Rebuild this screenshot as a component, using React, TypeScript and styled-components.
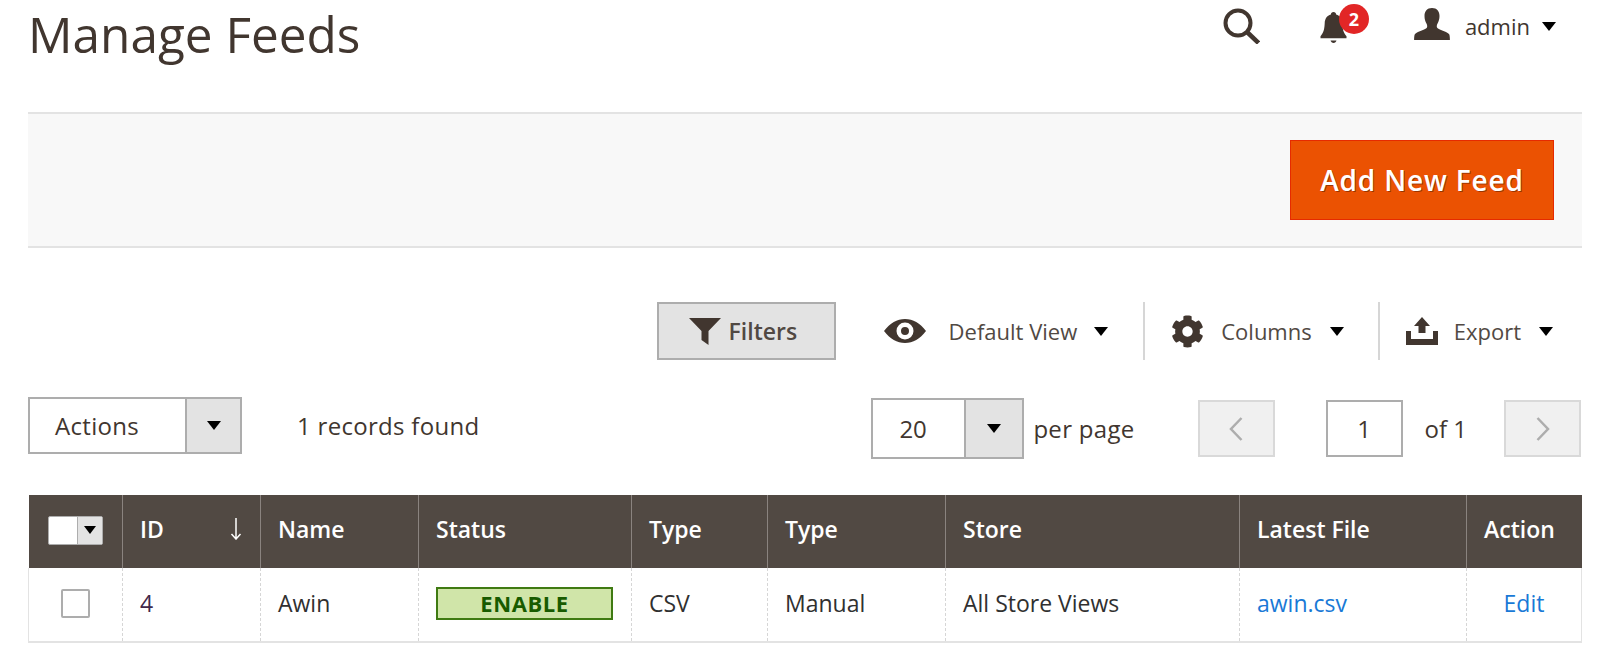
import React from 'react'
import styled, { createGlobalStyle } from 'styled-components'
import { FaCog } from 'react-icons/fa'

const GlobalStyle = createGlobalStyle`
	html, body {
		margin: 0;
		padding: 0;
		background: #fff;
	}
	body {
		font-family: 'Open Sans', 'Noto Sans', sans-serif;
		font-size: 23px;
		color: #303030;
	}
`

const Page = styled.div`
	width: 1600px;
	height: 659px;
	overflow: hidden;
	padding: 0 18px 0 28px;
	box-sizing: border-box;
`

const TopBar = styled.header`
	display: flex;
	justify-content: space-between;
	height: 112px;
`

const Title = styled.h1`
	margin: 4px 0 0;
	font-size: 49.5px;
	line-height: 60px;
	font-weight: 400;
	color: #41362f;
`

const TopActions = styled.div`
	display: flex;
	align-items: flex-start;
	padding: 8px 26px 0 0;
`

const SearchIcon = styled.svg`
	width: 37px;
	height: 36px;
	margin-right: 60px;
	color: #41362f;
`

const BellWrap = styled.div`
	position: relative;
	width: 27px;
	height: 31px;
	margin: 4px 67px 0 0;
	color: #41362f;
`

const Badge = styled.span`
	position: absolute;
	left: 19px;
	top: -8px;
	width: 30px;
	height: 30px;
	border-radius: 50%;
	background: #e22626;
	color: #fff;
	font-size: 18px;
	font-weight: 700;
	line-height: 30px;
	text-align: center;
`

const UserIcon = styled.svg`
	width: 36px;
	height: 32px;
	margin-right: 15px;
	color: #41362f;
`

const UserName = styled.span`
	margin: 0 12px 0 0;
	font-size: 22px;
	line-height: 36px;
	color: #41362f;
`

const Caret = styled.span<{ $w?: number; $mt?: number }>`
	display: inline-block;
	flex: none;
	width: 0;
	height: 0;
	margin-top: ${({ $mt }) => $mt ?? 0}px;
	border-style: solid;
	border-color: #000 transparent transparent;
	border-width: ${({ $w = 14 }) => `${Math.round($w * 0.64)}px ${$w / 2}px 0`};
`

const ActionBar = styled.section`
	display: flex;
	justify-content: flex-end;
	align-items: center;
	height: 136px;
	box-sizing: border-box;
	padding-right: 28px;
	background: #f8f8f8;
	border-top: 2px solid #e3e3e3;
	border-bottom: 2px solid #e3e3e3;
`

const PrimaryButton = styled.button`
	width: 264px;
	height: 80px;
	padding: 0;
	background: #eb5202;
	border: 1px solid #e62a00;
	color: #fff;
	font-family: inherit;
	font-size: 28px;
	font-weight: 600;
	letter-spacing: 0.85px;
	text-shadow: 1px 1px 0 rgba(0, 0, 0, 0.35);
`

const Toolbar = styled.section`
	display: flex;
	justify-content: flex-end;
	align-items: center;
	height: 58px;
	margin-top: 54px;
	padding-right: 29px;
	font-size: 22px;
`

const FilterButton = styled.button`
	display: flex;
	align-items: center;
	gap: 8px;
	width: 179px;
	height: 58px;
	margin-right: 48px;
	padding: 0 0 0 30px;
	background: #e3e3e3;
	border: 2px solid #adadad;
	color: #514943;
	font-family: inherit;
	font-size: 23px;
	font-weight: 600;
`

const ToolItem = styled.div<{ $divided?: boolean; $end?: number }>`
	display: flex;
	align-items: center;
	height: 58px;
	padding: ${({ $divided, $end = 34 }) =>
		`0 ${$end}px 0 ${$divided ? 26 : 0}px`};
	border-left: ${({ $divided }) => ($divided ? '2px solid #d6d6d6' : 'none')};
`

const ToolLabel = styled.span<{ $gap: number; $after?: number }>`
	margin: 0 ${({ $after = 17 }) => $after}px 0 ${({ $gap }) => $gap}px;
	color: #514943;
`

const EyeIcon = styled.svg`
	width: 42px;
	height: 24px;
	color: #41362f;
`

const ExportIcon = styled.svg`
	width: 32px;
	height: 28px;
	color: #41362f;
`

const GearIcon = styled(FaCog)`
	width: 33px;
	height: 33px;
	color: #41362f;
`

const PagerRow = styled.section`
	display: flex;
	align-items: center;
	height: 61px;
	margin-top: 38px;
	padding-right: 1px;
	font-size: 24px;
`

const SelectBox = styled.div<{ $w: number; $h: number; $arrow: number; $top?: boolean }>`
	display: grid;
	grid-template-columns: 1fr ${({ $arrow }) => $arrow}px;
	width: ${({ $w }) => $w}px;
	height: ${({ $h }) => $h}px;
	margin-top: ${({ $top }) => ($top ? '-1px' : '0')};
	box-sizing: border-box;
	border: 2px solid #adadad;
	background: #fff;
	align-self: ${({ $top }) => ($top ? 'flex-start' : 'center')};
`

const SelectText = styled.span<{ $pad: number; $spaced?: boolean }>`
	align-self: center;
	padding-left: ${({ $pad }) => $pad}px;
	color: #41362f;
	letter-spacing: ${({ $spaced }) => ($spaced ? '0.3px' : '0')};
`

const SelectArrow = styled.span`
	display: flex;
	align-items: center;
	justify-content: center;
	background: #e3e3e3;
	border-left: 2px solid #adadad;
`

const RecordsText = styled.span`
	margin: 0 0 6px 55px;
	flex: 1;
	color: #41362f;
	letter-spacing: 0.3px;
`

const PerPage = styled.span`
	margin: 0 63px 0 9px;
	color: #41362f;
	letter-spacing: 0.3px;
`

const PageButton = styled.button`
	display: flex;
	align-items: center;
	justify-content: center;
	width: 77px;
	height: 57px;
	padding: 0;
	background: #f0f0f0;
	border: 2px solid #d9d9d9;
	color: #adadad;
`

const PageInput = styled.div`
	display: flex;
	align-items: center;
	justify-content: center;
	width: 77px;
	height: 57px;
	margin-left: 51px;
	box-sizing: border-box;
	border: 2px solid #adadad;
	color: #41362f;
`

const PageOf = styled.span`
	margin: 0 37px 0 22px;
	color: #41362f;
`

const Chevron = styled.svg`
	width: 16px;
	height: 26px;
`

const Table = styled.table`
	width: 1553px;
	margin-top: 36px;
	border-collapse: collapse;
	table-layout: fixed;
`

const Col = styled.col<{ $w: number }>`
	width: ${({ $w }) => $w}px;
`

const HeadCell = styled.th`
	height: 73px;
	padding: 0 0 5px 17px;
	box-sizing: border-box;
	background: #514943;
	border-left: 1px solid #8a837f;
	color: #fff;
	font-size: 23px;
	font-weight: 600;
	text-align: left;

	&:first-child {
		padding: 0 0 3px;
		border-left: 0;
	}
`

const HeadInner = styled.div`
	display: flex;
	align-items: center;
	justify-content: space-between;
	padding-right: 18px;
`

const SortArrow = styled.svg`
	width: 12px;
	height: 22px;
`

const BodyCell = styled.td<{ $center?: boolean }>`
	height: 74px;
	padding: ${({ $center }) => ($center ? '0 0 3px' : '0 0 3px 17px')};
	box-sizing: border-box;
	background: #fff;
	border-left: 1px dashed #d6d6d6;
	border-bottom: 2px solid #e3e3e3;
	text-align: ${({ $center }) => ($center ? 'center' : 'left')};

	&:first-child {
		border-left: 1px solid #e3e3e3;
	}
	&:last-child {
		border-right: 1px solid #e3e3e3;
	}
`

const HeadCheck = styled.div`
	display: grid;
	grid-template-columns: 28px 1fr;
	width: 55px;
	height: 29px;
	margin: 0 0 0 19px;
	box-sizing: border-box;
	background: #fff;
	border: 1px solid #adadad;
	border-radius: 2px;
`

const HeadCheckArrow = styled.span`
	display: flex;
	align-items: center;
	justify-content: center;
	background: #e3e3e3;
	border-left: 1px solid #adadad;
`

const RowCheck = styled.div`
	width: 29px;
	height: 29px;
	margin: 0 auto;
	box-sizing: border-box;
	border: 2px solid #adadad;
	border-radius: 2px;
`

const StatusBadge = styled.div`
	width: 177px;
	height: 33px;
	box-sizing: border-box;
	background: #d0e5a9;
	border: 2px solid #3f7a12;
	color: #185b00;
	font-size: 22px;
	font-weight: 700;
	letter-spacing: 0.6px;
	line-height: 29px;
	text-align: center;
`

const RowLink = styled.a`
	color: #1979d6;
	text-decoration: none;
`

const IdText = styled.span`
	color: #41284a;
`

const columns = [94, 138, 158, 213, 136, 178, 294, 227, 115]
const heads = ['Name', 'Status', 'Type', 'Type', 'Store', 'Latest File', 'Action']

export default function App() {
	return (
		<Page>
			<GlobalStyle />
			<TopBar>
				<Title>Manage Feeds</Title>
				<TopActions>
					<SearchIcon viewBox="0 0 37 36" fill="none" stroke="currentColor">
						<circle cx="15" cy="15" r="12.5" strokeWidth="4" />
						<path d="M24 24 L35.5 35" strokeWidth="4.5" />
					</SearchIcon>
					<BellWrap>
						<svg width="27" height="31" viewBox="0 0 27 31" fill="currentColor">
							<path d="M13.5 0 c1.6 0 2.6 1 2.6 2.6 c4 1 6 4.4 6.2 8.6 c.2 5 .8 9 4.2 13 v2 H.5 v-2 c3.400-4 4-8 4.200-13 c.2-4.200 2.200-7.600 6.200-8.600 C10.900 1 11.900 0 13.500 0 Z" />
							<path d="M10.500 28.500 h6 c-.5 1.500-1.500 2.500-3 2.500 s-2.500-1-3-2.500 Z" />
						</svg>
						<Badge>2</Badge>
					</BellWrap>
					<UserIcon viewBox="0 0 36 32" fill="currentColor">
						<path d="M18 0 c5 0 7.500 3.500 7.500 8 c0 3-.8 5.500-1.800 7.300 c-.8 1.500-1.200 3-.7 4.200 c1 2 9 3.500 12 6.500 c.8 1 .9 4 .9 6 H.1 c0-2 .1-5 .9-6 c3-3 11-4.500 12-6.500 c.5-1.200.1-2.700-.7-4.200 C11.300 13.500 10.500 11 10.500 8 c0-4.500 2.500-8 7.500-8 Z" />
					</UserIcon>
					<UserName>admin</UserName>
					<Caret $w={14} $mt={14} />
				</TopActions>
			</TopBar>

			<ActionBar>
				<PrimaryButton>Add New Feed</PrimaryButton>
			</ActionBar>

			<Toolbar>
				<FilterButton>
					<svg width="32" height="27" viewBox="0 0 32 27" fill="#41362f">
						<path d="M0 0 H32 L19.500 13 V27 L12.500 22 V13 Z" />
					</svg>
					Filters
				</FilterButton>
				<ToolItem $end={35}>
					<EyeIcon viewBox="0 0 42 24">
						<path
							fill="currentColor"
							fillRule="evenodd"
							d="M0 12 C6 4 13 0 21 0 S36 4 42 12 C36 20 29 24 21 24 S6 20 0 12 Z M21 3.500 a8.500 8.500 0 1 0 0 17 a8.500 8.500 0 1 0 0-17 Z M21 8 a4 4 0 1 1 0 8 a4 4 0 1 1 0-8 Z"
						/>
					</EyeIcon>
					<ToolLabel $gap={23}>Default View</ToolLabel>
					<Caret $w={14} />
				</ToolItem>
				<ToolItem $divided>
					<GearIcon />
					<ToolLabel $gap={17} $after={18}>Columns</ToolLabel>
					<Caret $w={14} />
				</ToolItem>
				<ToolItem $divided $end={0}>
					<ExportIcon viewBox="0 0 32 28" fill="currentColor">
						<path d="M16 0 L24 9 H19.500 V16 H12.500 V9 H8 Z" />
						<path d="M0 14 H5 V22 H27 V14 H32 V28 H0 Z" />
					</ExportIcon>
					<ToolLabel $gap={16} $after={18}>Export</ToolLabel>
					<Caret $w={14} />
				</ToolItem>
			</Toolbar>

			<PagerRow>
				<SelectBox $w={214} $h={57} $arrow={55} $top>
					<SelectText $pad={25} $spaced>Actions</SelectText>
					<SelectArrow>
						<Caret $w={14} />
					</SelectArrow>
				</SelectBox>
				<RecordsText>1 records found</RecordsText>
				<SelectBox $w={153} $h={61} $arrow={58}>
					<SelectText $pad={26}>20</SelectText>
					<SelectArrow>
						<Caret $w={14} />
					</SelectArrow>
				</SelectBox>
				<PerPage>per page</PerPage>
				<PageButton>
					<Chevron viewBox="0 0 16 26" fill="none" stroke="currentColor" strokeWidth="2.500">
						<path d="M13.500 2 L3 13 L13.500 24" />
					</Chevron>
				</PageButton>
				<PageInput>1</PageInput>
				<PageOf>of 1</PageOf>
				<PageButton>
					<Chevron viewBox="0 0 16 26" fill="none" stroke="currentColor" strokeWidth="2.500">
						<path d="M2.500 2 L13 13 L2.500 24" />
					</Chevron>
				</PageButton>
			</PagerRow>

			<Table>
				<colgroup>
					{columns.map((w, i) => (
						<Col key={i} $w={w} />
					))}
				</colgroup>
				<thead>
					<tr>
						<HeadCell>
							<HeadCheck>
								<span />
								<HeadCheckArrow>
									<Caret $w={12} />
								</HeadCheckArrow>
							</HeadCheck>
						</HeadCell>
						<HeadCell>
							<HeadInner>
								ID
								<SortArrow viewBox="0 0 12 22" fill="none" stroke="#fff" strokeWidth="1.500">
									<path d="M6 0 V21 M1.500 16 L6 21 L10.500 16" />
								</SortArrow>
							</HeadInner>
						</HeadCell>
						{heads.map((h, i) => (
							<HeadCell key={i}>{h}</HeadCell>
						))}
					</tr>
				</thead>
				<tbody>
					<tr>
						<BodyCell $center>
							<RowCheck />
						</BodyCell>
						<BodyCell>
							<IdText>4</IdText>
						</BodyCell>
						<BodyCell>Awin</BodyCell>
						<BodyCell>
							<StatusBadge>ENABLE</StatusBadge>
						</BodyCell>
						<BodyCell>CSV</BodyCell>
						<BodyCell>Manual</BodyCell>
						<BodyCell>All Store Views</BodyCell>
						<BodyCell>
							<RowLink href="#">awin.csv</RowLink>
						</BodyCell>
						<BodyCell $center>
							<RowLink href="#">Edit</RowLink>
						</BodyCell>
					</tr>
				</tbody>
			</Table>
		</Page>
	)
}
